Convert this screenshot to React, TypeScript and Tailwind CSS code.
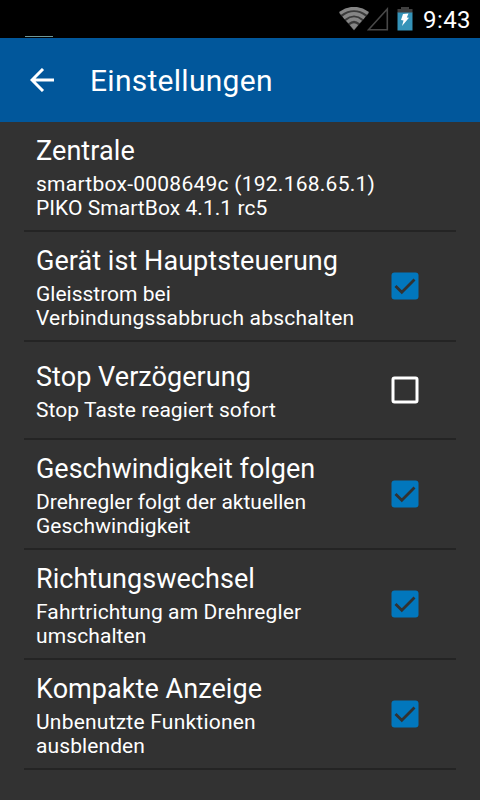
import React from 'react';

type Line = {
    text: string;
    className?: string;
};

type Setting = {
    title: string;
    titleClass?: string;
    lines: Line[];
    checked?: boolean;
    height: string;
};

const settings: Setting[] = [
    {
        title: 'Zentrale',
        titleClass: 'tracking-[0.08px]',
        lines: [
            { text: 'smartbox-0008649c (192.168.65.1)', className: 'tracking-[0.25px]' },
            { text: 'PIKO SmartBox 4.1.1 rc5', className: 'tracking-[0.05px]' },
        ],
        height: 'h-[110px]',
    },
    {
        title: 'Gerät ist Hauptsteuerung',
        titleClass: 'tracking-[0.05px]',
        lines: [{ text: 'Gleisstrom bei' }, { text: 'Verbindungssabbruch abschalten', className: 'tracking-[0.2px]' }],
        checked: true,
        height: 'h-[110px]',
    },
    {
        title: 'Stop Verzögerung',
        titleClass: 'tracking-[0.05px]',
        lines: [{ text: 'Stop Taste reagiert sofort', className: 'tracking-[0.06px]' }],
        checked: false,
        height: 'h-[98px]',
    },
    {
        title: 'Geschwindigkeit folgen',
        titleClass: 'tracking-[-0.04px]',
        lines: [{ text: 'Drehregler folgt der aktuellen' }, { text: 'Geschwindigkeit', className: 'tracking-[0.06px]' }],
        checked: true,
        height: 'h-[110px]',
    },
    {
        title: 'Richtungswechsel',
        titleClass: 'tracking-[0.03px]',
        lines: [
            { text: 'Fahrtrichtung am Drehregler', className: 'tracking-[0.11px]' },
            { text: 'umschalten', className: 'tracking-[0.1px]' },
        ],
        checked: true,
        height: 'h-[110px]',
    },
    {
        title: 'Kompakte Anzeige',
        titleClass: 'tracking-[0.06px]',
        lines: [
            { text: 'Unbenutzte Funktionen', className: 'tracking-[0.22px]' },
            { text: 'ausblenden', className: 'tracking-[0.1px]' },
        ],
        checked: true,
        height: 'h-[110px]',
    },
];

const Checkbox = ({ checked }: { checked: boolean }) => (
    <svg width="28" height="28" viewBox="0 0 28 28" fill="none" className="shrink-0">
        {checked ? (
            <>
                <rect x="0.5" y="0.5" width="27" height="27" rx="3" fill="#0277bd" />
                <path d="M4.5 14l6.3 6.3L23.5 7.5" stroke="#323232" strokeWidth="2.8" />
            </>
        ) : (
            <rect x="2" y="2" width="24" height="24" rx="1.5" stroke="#fff" strokeWidth="3" />
        )}
    </svg>
);

const WifiIcon = () => (
    <svg width="30" height="24" viewBox="0 0 30 24" fill="none">
        <path d="M0 6Q15 -5.5 30 6L15 23.5Z" fill="#3a3a3a" />
        <g stroke="#858585" strokeWidth="3.4">
            <path d="M1 6.3Q15 -3.2 29 6.3" />
            <path d="M4.5 10.8Q15 2.8 25.5 10.8" />
            <path d="M8.2 15Q15 9 21.8 15" />
        </g>
        <path d="M10.8 18Q15 14.5 19.2 18L15 23Z" fill="#858585" />
    </svg>
);

const SignalIcon = () => (
    <svg width="22" height="24" viewBox="0 0 22 24" fill="none">
        <path d="M20.3 2V22.7H1.5Z" stroke="#484848" strokeWidth="1.6" />
    </svg>
);

const BatteryIcon = () => (
    <svg width="16" height="24" viewBox="0 0 16 24">
        <path d="M0.5 6V2H4V0H12V2H15.5V6Z" fill="#404040" />
        <path d="M0.5 5.5H15.5V23.5H0.5Z" fill="#3593b8" />
        <path d="M6 7L11.5 6.5L9.8 10.5L12 10.7L5 19L6.5 13.5L4 13Z" fill="#fff" />
    </svg>
);

const StatusBar = () => (
    <div className="relative flex h-[38px] items-start justify-end bg-black pr-[9px]">
        <div className="absolute left-[25px] top-[36px] h-px w-7 bg-[#709898]" />
        <div className="flex pt-[7px]">
            <WifiIcon />
            <div className="-ml-[2px]">
                <SignalIcon />
            </div>
            <div className="ml-2">
                <BatteryIcon />
            </div>
        </div>
        <span className="ml-[10px] pt-px text-2xl leading-[39px] tracking-[0.4px] text-white">9:43</span>
    </div>
);

export default function App() {
    return (
        <div className="h-[800px] w-[480px] overflow-hidden bg-[#323232] font-['Roboto',sans-serif] text-white">
            <StatusBar />
            <header className="flex h-[84px] items-center bg-[#01579b]">
                <svg width="24" height="24" viewBox="0 0 24 24" className="ml-[30px]" fill="none" stroke="#fff" strokeWidth="3">
                    <path d="M24 12H2M13 1L2 12l11 11" />
                </svg>
                <h1 className="ml-9 pt-px text-[30px] leading-9 tracking-[0.28px]">Einstellungen</h1>
            </header>
            <main className="px-6">
                {settings.map((s) => (
                    <section key={s.title} className={`flex items-center justify-between border-b-2 border-[#242424] pl-3 pr-[37px] ${s.height}`}>
                        <div className="whitespace-nowrap pt-px">
                            <h2 className={`mb-[3px] text-[27px] leading-9 ${s.titleClass ?? ''}`}>{s.title}</h2>
                            {s.lines.map((line) => (
                                <p key={line.text} className={`text-[21px] leading-6 ${line.className ?? ''}`}>
                                    {line.text}
                                </p>
                            ))}
                        </div>
                        {s.checked !== undefined && <Checkbox checked={s.checked} />}
                    </section>
                ))}
            </main>
        </div>
    );
}
